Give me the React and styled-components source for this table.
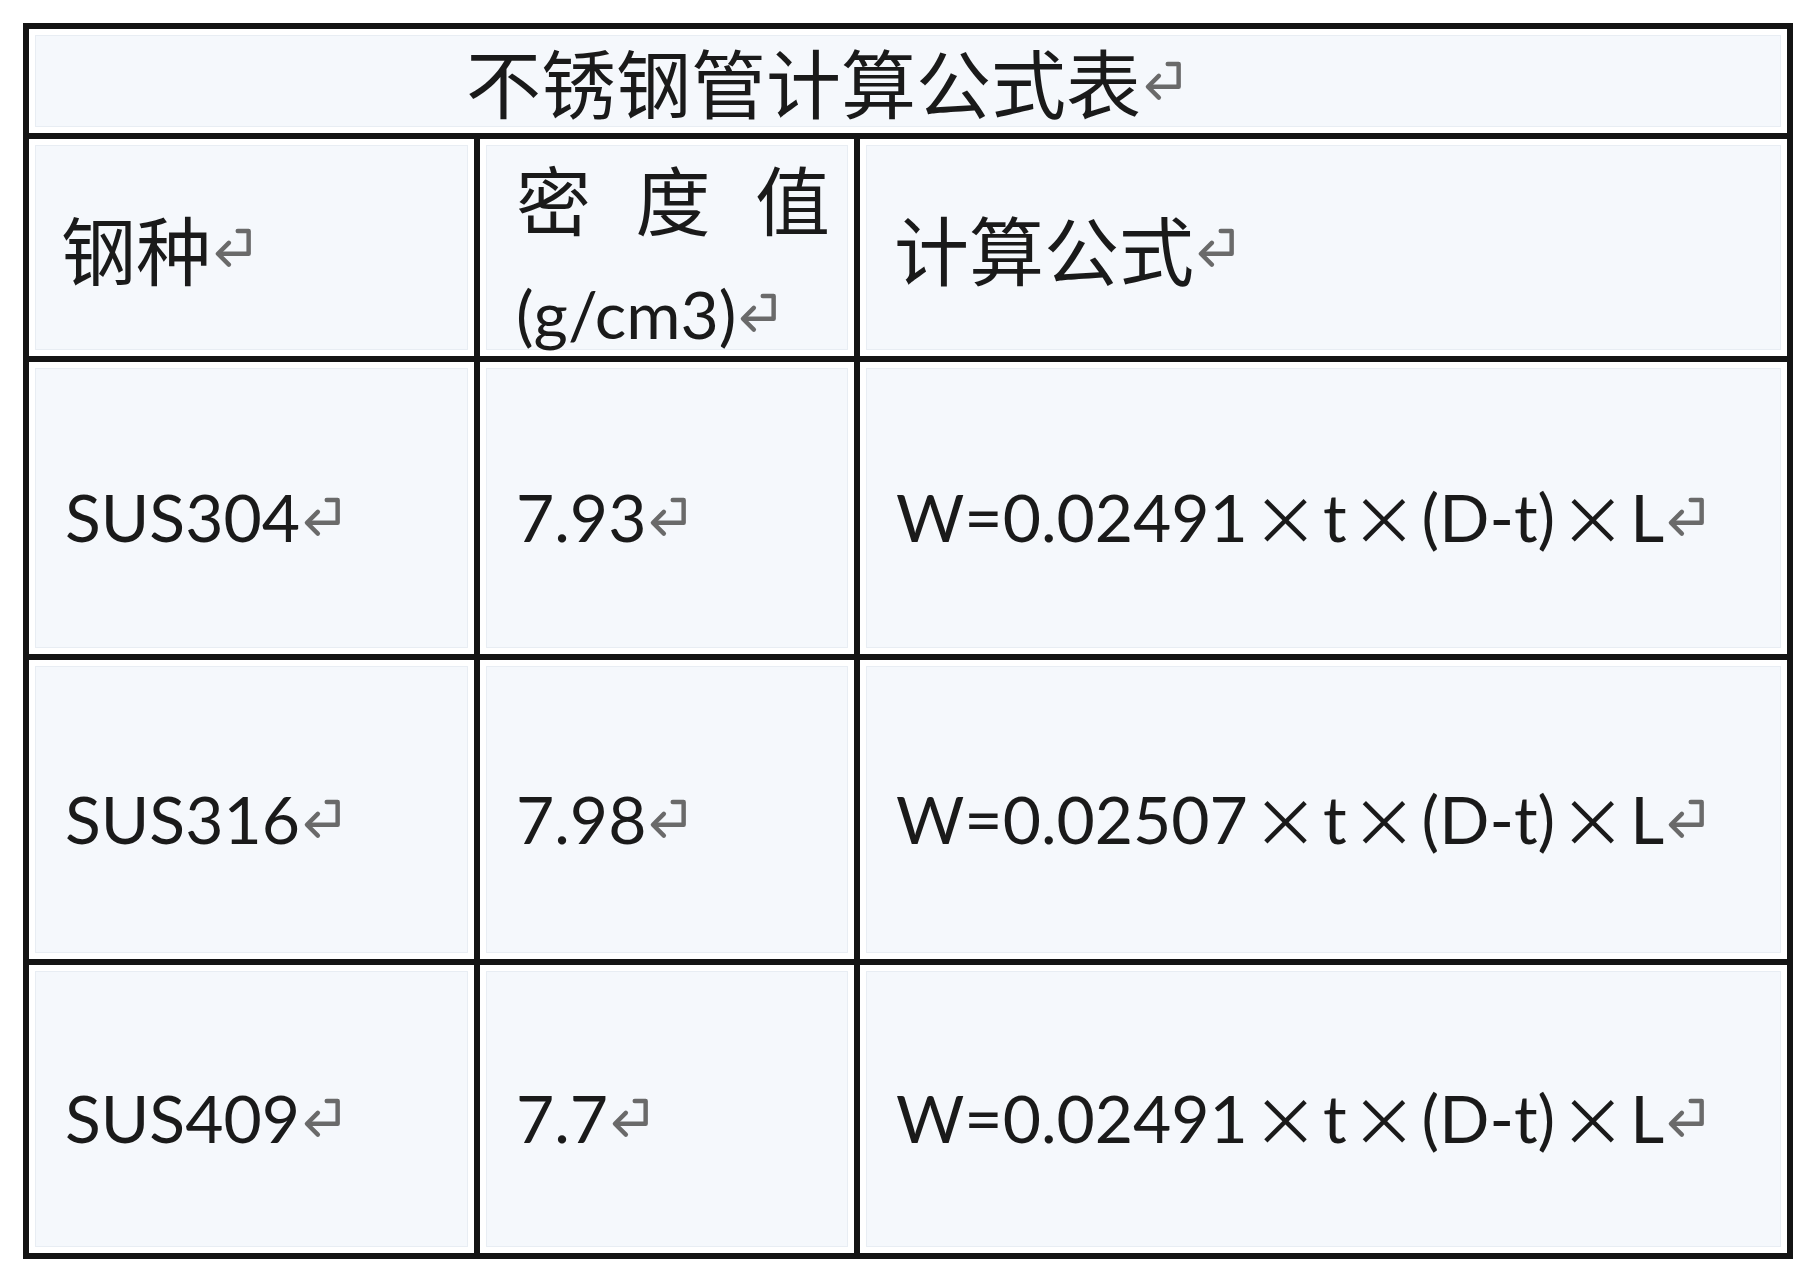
import React from 'react';
import styled, { createGlobalStyle } from 'styled-components';

const GlobalStyle = createGlobalStyle`
	html, body {
		margin: 0;
		background: #ffffff;
	}
`;

const Page = styled.div`
	padding: 23px 0 0 23px;
`;

// black grid lines come from the sheet background showing through the gaps
const Sheet = styled.div`
	display: grid;
	grid-template-columns: 445px 374px 927px;
	grid-template-rows: 104px 217px 292px 299px 288px;
	gap: 6px;
	padding: 6px;
	width: max-content;
	background: #141414;
	color: #1a1a1a;
`;

const Cell = styled.div`
	display: flex;
	padding: 6px;
	background: #ffffff;
	grid-column: ${(p) => (p.$span ? '1 / -1' : 'auto')};
`;

const Inner = styled.div`
	flex: 1;
	display: flex;
	flex-direction: ${(p) => (p.$stack ? 'column' : 'row')};
	align-items: ${(p) => (p.$stack ? 'flex-start' : 'center')};
	justify-content: ${(p) => (p.$stack ? 'center' : 'flex-start')};
	box-sizing: border-box;
	padding-left: ${(p) => p.$indent || 29}px;
	padding-top: ${(p) => p.$drop || 0}px;
	background: #f5f8fc;
	border: 1px solid #e8edf3;
	font-family: Lato, 'Noto Sans CJK SC', sans-serif;
	font-size: 66px;
	line-height: 1.2;
	white-space: nowrap;
`;

const Han = styled.span`
	font-family: 'Noto Sans CJK SC', sans-serif;
	font-size: 75px;
`;

const SpacedLine = styled.div`
	display: flex;
	justify-content: space-between;
	width: 314px;
	line-height: 80px;
`;

const UnitLine = styled.div`
	margin-top: 36px;
	line-height: 80px;
`;

const Times = styled.span`
	display: inline-block;
	width: 75px;
	text-align: center;
	font-family: 'Noto Sans CJK SC', sans-serif;
	font-weight: 400;
	font-size: 66px;
	vertical-align: 0.16em;
`;

const MarkSvg = styled.svg`
	width: 0.6em;
	height: 0.63em;
	margin-left: 0.03em;
	vertical-align: 0.07em;
	stroke: #6a6a6a;
	stroke-width: 4.5;
	stroke-linecap: round;
	stroke-linejoin: round;
	fill: none;
`;

function Mark() {
	return (
		<MarkSvg viewBox="0 0 40 42">
			<path d="M25 4 H36 V27 H8" />
			<path d="M16 16 L5 27 L16 38" />
		</MarkSvg>
	);
}

const rows = [
	{ grade: 'SUS304', density: '7.93', factor: '0.02491' },
	{ grade: 'SUS316', density: '7.98', factor: '0.02507' },
	{ grade: 'SUS409', density: '7.7', factor: '0.02491' },
];

function Formula({ factor }) {
	return (
		<>
			W={factor}
			<Times>×</Times>t<Times>×</Times>(D-t)<Times>×</Times>L
			<Mark />
		</>
	);
}

export default function App() {
	return (
		<Page>
			<GlobalStyle />
			<Sheet>
				<Cell $span>
					<Inner $indent={430}>
						<Han>不锈钢管计算公式表</Han>
						<Mark />
					</Inner>
				</Cell>

				<Cell>
					<Inner $indent={25}>
						<Han>钢种</Han>
						<Mark />
					</Inner>
				</Cell>
				<Cell>
					<Inner $stack $indent={29} $drop={16}>
						<SpacedLine>
							<Han>密</Han>
							<Han>度</Han>
							<Han>值</Han>
						</SpacedLine>
						<UnitLine>
							(g/cm3)
							<Mark />
						</UnitLine>
					</Inner>
				</Cell>
				<Cell>
					<Inner $indent={27}>
						<Han>计算公式</Han>
						<Mark />
					</Inner>
				</Cell>

				{rows.map((row) => (
					<React.Fragment key={row.grade}>
						<Cell>
							<Inner $drop={18}>
								{row.grade}
								<Mark />
							</Inner>
						</Cell>
						<Cell>
							<Inner $drop={18}>
								{row.density}
								<Mark />
							</Inner>
						</Cell>
						<Cell>
							<Inner $drop={18}>
								<Formula factor={row.factor} />
							</Inner>
						</Cell>
					</React.Fragment>
				))}
			</Sheet>
		</Page>
	);
}
